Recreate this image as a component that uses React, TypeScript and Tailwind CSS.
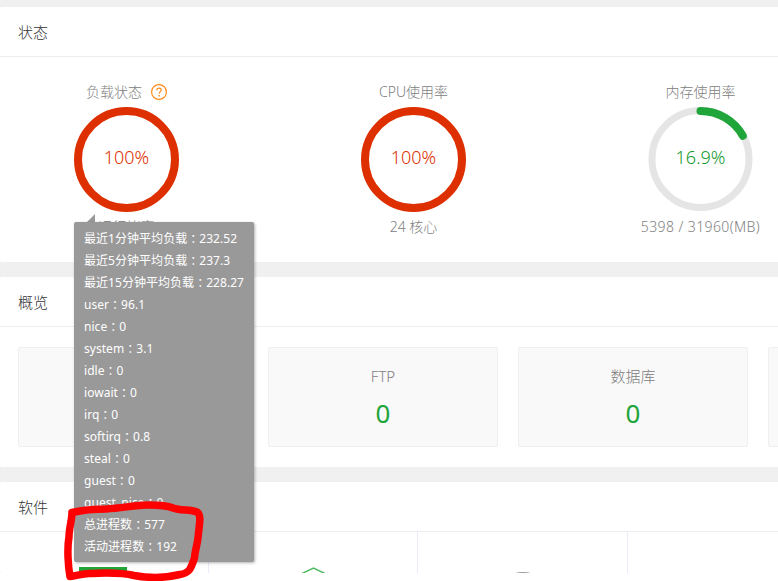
import type { ReactNode } from "react";

const loadDetails: [string, string][] = [
  ["最近1分钟平均负载", "232.52"],
  ["最近5分钟平均负载", "237.3"],
  ["最近15分钟平均负载", "228.27"],
  ["user", "96.1"],
  ["nice", "0"],
  ["system", "3.1"],
  ["idle", "0"],
  ["iowait", "0"],
  ["irq", "0"],
  ["softirq", "0.8"],
  ["steal", "0"],
  ["guest", "0"],
  ["guest_nice", "0"],
  ["总进程数", "577"],
  ["活动进程数", "192"],
];

function Section({ title, className, children }: { title: string; className: string; children: ReactNode }) {
  return (
    <section className={`overflow-hidden rounded-l-[2px] bg-white ${className}`}>
      <h2 className="h-[50px] border-b border-[#ededed] pl-[18px] text-[15px] leading-[51px] font-light text-[#333]">{title}</h2>
      {children}
    </section>
  );
}

function FullRing() {
  return (
    <svg className="absolute inset-0" width="106" height="106" viewBox="0 0 106 106">
      <circle cx="52.5" cy="52.5" r="48.5" fill="none" stroke="#dd2f00" strokeWidth="8" />
    </svg>
  );
}

function PartialRing() {
  return (
    <svg className="absolute inset-0" width="106" height="106" viewBox="0 0 106 106">
      <circle cx="52.5" cy="52" r="48.5" fill="none" stroke="#e5e5e5" strokeWidth="7" />
      <path d="M52.5 4A48.5 48.5 0 0 1 94.8 28.8" fill="none" stroke="#20a53a" strokeWidth="8" strokeLinecap="round" />
    </svg>
  );
}

function Gauge({ title, value, note, ring, color, noteStyle }: { title: ReactNode; value: string; note: string; ring: ReactNode; color: string; noteStyle: string }) {
  return (
    <div className="flex w-[287px] shrink-0 flex-col items-center text-[14px] font-light text-[#808080]">
      <div className="flex h-[20px] items-center leading-[20px]">{title}</div>
      <div className={`relative mt-[5px] h-[106px] w-[106px] text-center text-[18px] leading-[101px] ${color}`}>
        {ring}
        <span className="relative">{value}</span>
      </div>
      <div className={`mt-[4px] whitespace-nowrap leading-[20px] ${noteStyle}`}>{note}</div>
    </div>
  );
}

function Card({ label }: { label: string }) {
  return (
    <div className="h-[100px] w-[230px] shrink-0 rounded-[2px] border border-[#efefef] bg-[#f9f9f9] pt-[16px] text-center">
      <div className="h-[24px] text-[15px] leading-[24px] font-light text-[#808080]">{label}</div>
      <div className="mt-[7px] text-[26px] leading-[36px] text-[#20a53a]">{label && "0"}</div>
    </div>
  );
}

export default function App() {
  return (
    <div className="relative h-[581px] w-[778px] overflow-hidden bg-white font-['Noto_Sans','Noto_Sans_CJK_SC',sans-serif]">
      <div className="flex h-[573px] flex-col gap-[15px] bg-[#f0f0f0] pt-[7px]">
        <Section title="状态" className="h-[255px] shrink-0">
          <div className="-ml-[17px] flex pt-[25px]">
            <Gauge
              title={
                <>
                  <span>负载状态</span>
                  <svg className="ml-[8px]" width="17" height="17" viewBox="0 0 17 17">
                    <circle cx="9" cy="8" r="7.4" fill="none" stroke="#ff8c1a" strokeWidth="1.2" />
                    <path d="M6.7 6.2C6.700 4.800 7.700 4.100 9 4.100s2.300.7 2.300 2c0 1.600-2.200 1.700-2.200 3.600" fill="none" stroke="#ff8c1a" strokeWidth="1.2" />
                    <path d="M8.400 11h1.400v1.400H8.400z" fill="#ff8c1a" />
                  </svg>
                </>
              }
              value="100%"
              note="运行堵塞"
              ring={<FullRing />}
              color="text-[#dd2f00]"
              noteStyle=""
            />
            <Gauge title="CPU使用率" value="100%" note="24 核心" ring={<FullRing />} color="text-[#dd2f00]" noteStyle="" />
            <Gauge title="内存使用率" value="16.9%" note="5398 / 31960(MB)" ring={<PartialRing />} color="text-[#149a2e]" noteStyle="tracking-[0.4px]" />
          </div>
        </Section>
        <Section title="概览" className="h-[190px] shrink-0">
          <div className="flex gap-[20px] pt-[20px] pl-[18px]">
            <Card label="" />
            <Card label="FTP" />
            <Card label="数据库" />
            <Card label="" />
          </div>
        </Section>
        <Section title="软件" className="h-[91px] shrink-0">
          <div className="flex h-[41px]">
            <div className="w-[209px] border-r border-[#ebebfa] pt-[35px] pl-[79px]">
              <div className="h-[6px] w-[48px] bg-[#20a53a]" />
            </div>
            <div className="w-[209px] border-r border-[#ebebfa]">
              <svg width="208" height="41" viewBox="0 0 208 41">
                <path d="M92 42 104.500 36 117 42" fill="none" stroke="#4dba62" strokeWidth="1.5" />
              </svg>
            </div>
            <div className="w-[210px] border-r border-[#ebebfa]">
              <svg width="209" height="41" viewBox="0 0 209 41">
                <ellipse cx="105" cy="48" rx="16" ry="8" fill="#999" />
              </svg>
            </div>
          </div>
        </Section>
      </div>

      <svg className="absolute top-[214px] left-[86px]" width="9" height="9" viewBox="0 0 9 9">
        <path d="M9 0v9H0z" fill="#999" />
      </svg>
      <div className="absolute top-[222px] left-[74px] h-[340px] w-[180px] rounded-[2px] bg-[#999] py-[5px] pl-[10px] text-[12px] leading-[22px] whitespace-nowrap text-white shadow-[1px_1px_3px_rgba(0,0,0,0.3)]">
        {loadDetails.map(([name, value]) => (
          <div key={name} className="h-[22px] tracking-[0.04px]">
            {name}
            <span className="relative top-px font-['Noto_Sans_CJK_TC']">：</span>
            {value}
          </div>
        ))}
      </div>

      <svg className="absolute inset-0" width="778" height="581" viewBox="0 0 778 581">
        <path
          d="M72 512.500C83 510 95 509 106 509C123 508 135 505 148 505C158 505 166 505 173 508C181 511 190 509 197 512C202 515 199 526 198.500 533C198 543 195 550 194.500 558C191 568 190 573 180 574.500C166 578 148 578 134 575.500C120 572 102 573 89 573.500C81 574 76 576 70 576.500C68 566 67 548 69 537C69 528 72 520 72 512.500"
          fill="none"
          stroke="#fe0000"
          strokeWidth="7.500"
          strokeLinecap="round"
          strokeLinejoin="round"
        />
      </svg>
    </div>
  );
}
